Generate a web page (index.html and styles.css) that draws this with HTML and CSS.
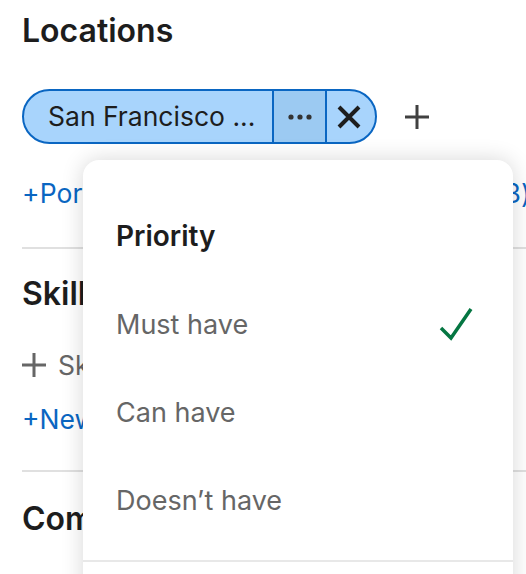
FILE: index.html
```html
<!DOCTYPE html>
<html lang="en">
<head>
    <meta charset="UTF-8">
    <meta name="viewport" content="width=device-width, initial-scale=1.0">
    <title>Preferences</title>
    <link rel="stylesheet" href="styles.css">
</head>
<body>
    <div class="page">
        <section class="section">
            <h2>Locations</h2>
            <div class="pill-row">
                <div class="pill">
                    <span class="pill-label">San Francisco ...</span>
                    <button class="pill-more" aria-label="More">
                        <svg width="24" height="6" viewBox="0 0 24 6"><circle cx="3" cy="3" r="2.6"/><circle cx="12" cy="3" r="2.6"/><circle cx="21" cy="3" r="2.6"/></svg>
                    </button>
                    <button class="pill-remove" aria-label="Remove">
                        <svg width="24" height="24" viewBox="0 0 24 24"><path d="M2 2 L22 22 M22 2 L2 22"/></svg>
                    </button>
                </div>
                <button class="add-btn" aria-label="Add">
                    <svg width="24" height="24" viewBox="0 0 24 24"><path d="M12 0 V24 M0 12 H24"/></svg>
                </button>
            </div>
            <a class="link first" href="#">+Portland, Oregon Metropolitan Area (3)</a>
        </section>

        <section class="section">
            <h2>Skills</h2>
            <div class="add-row">
                <svg width="24" height="24" viewBox="0 0 24 24"><path d="M12 0 V24 M0 12 H24"/></svg>
                <span>Skills</span>
            </div>
            <a class="link" href="#">+New skill</a>
        </section>

        <section class="section last">
            <h2>Companies</h2>
            <div class="add-row">
                <svg width="24" height="24" viewBox="0 0 24 24"><path d="M12 0 V24 M0 12 H24"/></svg>
            </div>
        </section>
    </div>

    <div class="menu">
        <h3>Priority</h3>
        <ul class="menu-list">
            <li class="selected">Must have
                <svg width="34" height="34" viewBox="0 0 34 34"><path d="M2 21 L12 31 L32 2"/></svg>
            </li>
            <li>Can have</li>
            <li>Doesn&rsquo;t have</li>
        </ul>
        <div class="menu-footer"></div>
    </div>
</body>
</html>
```

FILE: styles.css
```css
body {
    margin: 0;
    font-family: Inter, "Noto Sans", sans-serif;
    color: #1d1d1d;
    background: #fff;
    overflow: hidden;
    height: 574px;
}
.page {
    padding: 0 0 0 22px;
}
.section {
    border-bottom: 2px solid #e0e0e0;
    padding: 25px 0 35px;
    white-space: nowrap;
}
.section:first-child {
    padding: 11px 0 38px;
}
.section.last {
    border-bottom: 0;
    padding-top: 27px;
}
h2 {
    margin: 0;
    font-size: 32px;
    font-weight: 600;
    line-height: 40px;
}
.pill-row {
    display: flex;
    align-items: center;
    margin-top: 38px;
}
.pill {
    box-sizing: border-box;
    display: flex;
    height: 55px;
    border: 2px solid #0a66c2;
    border-radius: 28px;
    background: #a8d4fc;
    overflow: hidden;
}
.pill-label {
    width: 224px;
    padding-left: 24px;
    font-size: 26.5px;
    line-height: 51px;
}
.pill button {
    border: 0;
    border-left: 2px solid #0a66c2;
    background: transparent;
    padding: 0;
    display: flex;
    align-items: center;
    justify-content: center;
}
.pill-more {
    width: 53px;
    background: #9ccaf2 !important;
}
.pill-more svg {
    fill: #333;
}
.pill-remove {
    width: 50px;
    padding-right: 4px !important;
}
.pill-remove svg {
    stroke: #1d1d1d;
    stroke-width: 4;
    fill: none;
}
.add-btn {
    border: 0;
    background: none;
    padding: 0;
    margin-left: 28px;
    display: flex;
}
.add-btn svg, .add-row svg {
    stroke: #404040;
    stroke-width: 3;
}
.link {
    display: block;
    margin-top: 22px;
    font-size: 26.5px;
    line-height: 32px;
    color: #0a66c2;
    text-decoration: none;
}
.link.first {
    margin-top: 33px;
    letter-spacing: 0.1px;
}
.add-row {
    display: flex;
    align-items: center;
    gap: 12px;
    margin-top: 35px;
    font-size: 26.5px;
    color: #666;
}
.add-row svg {
    stroke: #666;
}
.menu {
    position: absolute;
    left: 83px;
    top: 160px;
    width: 430px;
    height: 460px;
    background: #fff;
    border-radius: 16px;
    box-shadow: 0 0 22px rgba(0, 0, 0, 0.16);
}
.menu h3 {
    margin: 0;
    padding: 56px 0 0 33px;
    font-size: 28px;
    font-weight: 600;
    line-height: 40px;
}
.menu-list {
    list-style: none;
    margin: 0;
    padding: 24px 0 0;
}
.menu-list li {
    display: flex;
    align-items: center;
    justify-content: space-between;
    height: 88px;
    padding: 0 40px 0 33px;
    font-size: 27px;
    color: #666;
}
.menu-list li svg {
    stroke: #057642;
    stroke-width: 3.5;
    fill: none;
}
.menu-footer {
    border-top: 2px solid #e8e8e8;
    margin-top: 16px;
    height: 60px;
}
```
